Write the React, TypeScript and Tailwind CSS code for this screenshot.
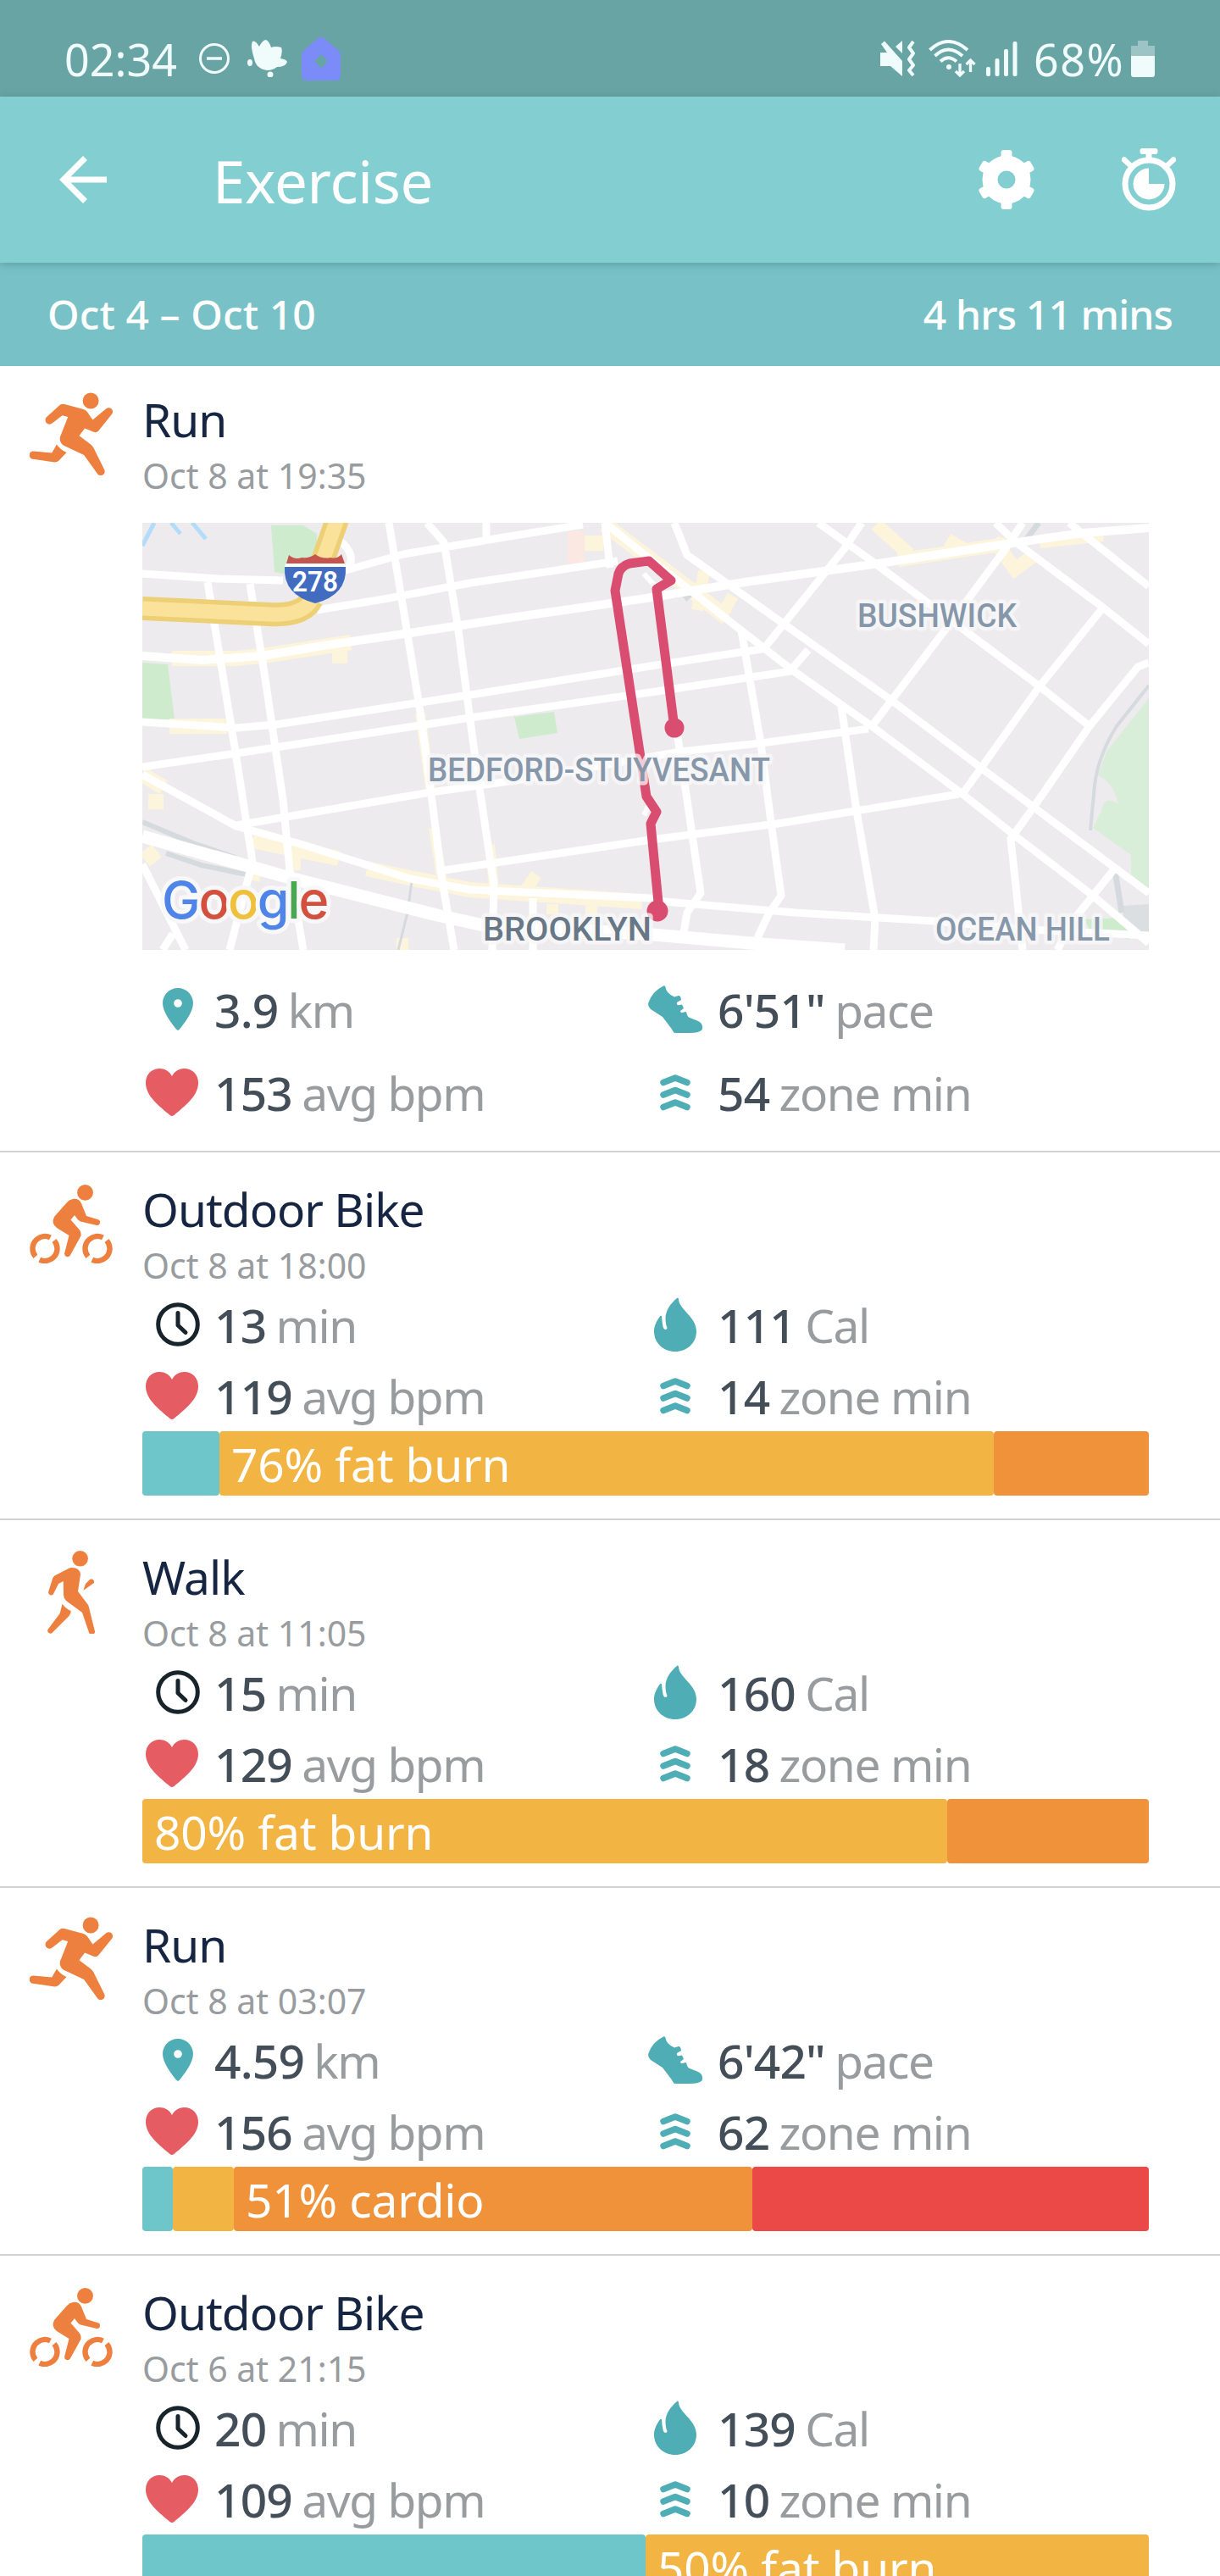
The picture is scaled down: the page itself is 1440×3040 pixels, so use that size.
import type { ReactNode } from "react";
import clsx from "clsx";

type ActivityType = "run" | "bike" | "walk";
type StatType = "distance" | "pace" | "heart" | "zone" | "time" | "calories";
type ZoneType = "light" | "fatBurn" | "cardio" | "peak";

interface Stat {
  type: StatType;
  value: string;
  unit: string;
}

interface Zone {
  type: ZoneType;
  width: number;
  label?: string;
}

interface Activity {
  id: number;
  type: ActivityType;
  title: string;
  date: string;
  stats: Stat[];
  hasMap?: boolean;
  zones?: Zone[];
}

const activities: Activity[] = [
  {
    id: 1,
    type: "run",
    title: "Run",
    date: "Oct 8 at 19:35",
    hasMap: true,
    stats: [
      { type: "distance", value: "3.9", unit: "km" },
      { type: "pace", value: "6'51\"", unit: "pace" },
      { type: "heart", value: "153", unit: "avg bpm" },
      { type: "zone", value: "54", unit: "zone min" },
    ],
  },
  {
    id: 2,
    type: "bike",
    title: "Outdoor Bike",
    date: "Oct 8 at 18:00",
    stats: [
      { type: "time", value: "13", unit: "min" },
      { type: "calories", value: "111", unit: "Cal" },
      { type: "heart", value: "119", unit: "avg bpm" },
      { type: "zone", value: "14", unit: "zone min" },
    ],
    zones: [
      { type: "light", width: 91 },
      { type: "fatBurn", width: 914, label: "76% fat burn" },
      { type: "cardio", width: 183 },
    ],
  },
  {
    id: 3,
    type: "walk",
    title: "Walk",
    date: "Oct 8 at 11:05",
    stats: [
      { type: "time", value: "15", unit: "min" },
      { type: "calories", value: "160", unit: "Cal" },
      { type: "heart", value: "129", unit: "avg bpm" },
      { type: "zone", value: "18", unit: "zone min" },
    ],
    zones: [
      { type: "fatBurn", width: 950, label: "80% fat burn" },
      { type: "cardio", width: 238 },
    ],
  },
  {
    id: 4,
    type: "run",
    title: "Run",
    date: "Oct 8 at 03:07",
    stats: [
      { type: "distance", value: "4.59", unit: "km" },
      { type: "pace", value: "6'42\"", unit: "pace" },
      { type: "heart", value: "156", unit: "avg bpm" },
      { type: "zone", value: "62", unit: "zone min" },
    ],
    zones: [
      { type: "light", width: 36 },
      { type: "fatBurn", width: 72 },
      { type: "cardio", width: 612, label: "51% cardio" },
      { type: "peak", width: 468 },
    ],
  },
  {
    id: 5,
    type: "bike",
    title: "Outdoor Bike",
    date: "Oct 6 at 21:15",
    stats: [
      { type: "time", value: "20", unit: "min" },
      { type: "calories", value: "139", unit: "Cal" },
      { type: "heart", value: "109", unit: "avg bpm" },
      { type: "zone", value: "10", unit: "zone min" },
    ],
    zones: [
      { type: "light", width: 594 },
      { type: "fatBurn", width: 594, label: "50% fat burn" },
    ],
  },
];

const zoneColors: Record<ZoneType, string> = {
  light: "bg-[#6fc6ca]",
  fatBurn: "bg-[#f2b544]",
  cardio: "bg-[#ef9239]",
  peak: "bg-[#eb4848]",
};

const activityIcons: Record<ActivityType, ReactNode> = {
  run: (
    <svg viewBox="105 69 295 293" className="h-[98px] w-[98px]" fill="#ed7f3f">
      <circle cx="322" cy="98" r="28.5" />
      <path d="M214 112 Q222 108 232 111 L296 128 Q304 131 310 138 L329 166 L376 127 A14 14 0 0 1 396 147 L350 204 Q342 213 332 209 L301 196 L281 222 L321 252 Q328 257 332 265 L370 342 A14 14 0 0 1 345 356 L298 291 L226 257 Q210 247 213 228 Q214 222 217 217 L241 155 L221 150 L186 177 A14 14 0 0 1 165 156 Z" />
      <path d="M201 253 Q214 272 236 282 L209 310 Q203 316 194 316 L117 305 A14 14 0 0 1 119 277 L184 283 Z" />
    </svg>
  ),
  bike: (
    <svg viewBox="0 0 98 93" className="mt-1 h-[93px] w-[98px]" fill="#ed7f3f">
      <circle cx="65.5" cy="9.4" r="9.4" />
      <path d="M51 17 Q58 16 61 22 L67 37 L80 41 A3.5 3.5 0 0 1 79 48 L60 43.5 Q57 42 55.5 39.5 L53 36 L48.5 41.5 L58.5 53 Q61 56 60.5 60.5 L47.8 83.5 A3.7 3.7 0 0 1 41 81.5 L46.5 60 L32 51 Q25 46 29 38 L44 21 Q47 17.5 51 17Z" />
      <g fill="none" stroke="#ed7f3f" strokeWidth="6.4" strokeDasharray="39.3 6.2">
        <circle cx="18" cy="75.5" r="14.5" transform="rotate(-41 18 75.5)" />
        <circle cx="80" cy="75.5" r="14.5" transform="rotate(-41 80 75.5)" />
      </g>
    </svg>
  ),
  walk: (
    <svg viewBox="0 0 56 98" className="mt-0.5 h-[98px] w-14" fill="#ed7f3f">
      <circle cx="38.6" cy="9.3" r="9.3" />
      <path d="M29 20 Q38 20 39 28 L36 48 L48 64 Q49 66 49.5 69 L55.7 94 A3.4 3.4 0 0 1 49 96.5 L41 73 L22 59 Q19 56 19 52 L18.8 36 L13 39 L7.5 50 A3.2 3.2 0 0 1 1.2 48.5 L6 33 Q6.5 31 8.5 29.5 L25 21 Q27 20 29 20Z" />
      <path d="M50 34 A3.4 3.4 0 0 1 55 38 L42.3 47 L45 39Z" />
      <path d="M17.5 62.7 Q21 68 27.6 71 Q28 74 25.5 77 L6 96.5 A3.3 3.3 0 0 1 .5 93 L14 75 Q15 73 15.5 71Z" />
    </svg>
  ),
};

const statIcons: Record<StatType, ReactNode> = {
  distance: (
    <svg viewBox="0 0 36 50" className="ml-6 h-[50px] w-9">
      <path
        fillRule="evenodd"
        fill="#4eadb5"
        d="M18 0 C28 0 36 8 36 18 C36 28 26 41 20 48.5 Q18 51 16 48.5 C10 41 0 28 0 18 C0 8 8 0 18 0Z M18 13.2 A4.8 4.8 0 1 0 18 22.8 A4.8 4.8 0 1 0 18 13.2Z"
      />
    </svg>
  ),
  pace: (
    <svg viewBox="0 0 64 56" className="ml-[3px] h-14 w-16" fill="#4eadb5">
      <path d="M18 .5 Q20 -.5 20.5 2 Q21 9 31 13.5 L36 12 Q38.5 12 39 17 L34 20 Q33 24 37 23 L40 22.5 L42 27 L38 30 Q38 33 42 31.5 L45 31 Q46 37 49 38 L58 41.5 Q66 45 63.5 52.5 Q60 56 48 56 L31 56 Q29 54 28 51.5 L17 37 L3 28 Q-1 24 .5 20 Q5 7 18 .5Z" />
    </svg>
  ),
  heart: (
    <svg viewBox="0 0 62 56" className="ml-1 h-14 w-[62px]" fill="#e65c63">
      <path d="M31 9 C34 3 40 0 45.5 0 C55 0 62 7 62 17 C62 33 45 45 33.5 55 Q31 57 28.5 55 C17 45 0 33 0 17 C0 7 7 0 16.5 0 C22 0 28 3 31 9Z" />
    </svg>
  ),
  zone: (
    <svg
      viewBox="0 0 36 43"
      className="ml-[17px] h-[43px] w-9"
      fill="none"
      stroke="#4eadb5"
      strokeWidth="7.5"
      strokeLinecap="round"
      strokeLinejoin="round"
    >
      <path d="M4 9.5 L18 4 L32 9.5 M4 24 L18 18.5 L32 24 M4 38.5 L18 33 L32 38.5" />
    </svg>
  ),
  time: (
    <svg
      viewBox="0 0 52 52"
      className="ml-4 h-[52px] w-[52px]"
      fill="none"
      stroke="#17242b"
      strokeWidth="5"
      strokeLinecap="round"
      strokeLinejoin="round"
    >
      <circle cx="26" cy="26" r="23.3" />
      <path d="M26 12.5 V27 L35 35.5" />
    </svg>
  ),
  calories: (
    <svg viewBox="0 0 50 64" className="ml-2.5 h-16 w-[50px]" fill="#4eadb5">
      <path d="M27 1 C20 7 13.5 15 13.5 25 C13.5 30 14.5 34 15.5 36 C15.5 38.5 12 38.5 11 36 C9.5 31 9.5 27 9 22.5 Q8 21 6.5 23 C3 28 0 34 0 40 C0 54 11 64 25 64 C39 64 50 54 50 40 C50 23 29 14 29 2 Q28.5 -.5 27 1Z" />
    </svg>
  ),
};

const StatusBar = () => (
  <div className="flex h-[114px] shrink-0 items-start justify-between bg-[#68a4a3] pt-[43px] pr-[77px] pl-[76px] text-[#f0fbfc]">
    <div className="flex h-[52px] items-center">
      <span className="w-[159px] pt-px text-[52px] leading-[52px]">02:34</span>
      <svg viewBox="0 0 36 36" className="h-9 w-9" fill="none" stroke="currentColor">
        <circle cx="18" cy="18" r="16.5" strokeWidth="3" />
        <path d="M9 18 H27" strokeWidth="3.5" />
      </svg>
      <svg viewBox="0 0 47 44" className="ml-[21px] h-11 w-[47px]" fill="currentColor">
        <path d="M8 22 C5 12 4 6 6 2 Q9 0 14 8 Q18 0 22 0 Q26 2 28 9 Q33 7 40 9 Q42 13 39 22 Q46 23 47 26 Q45 32 35 32 Q30 36 23 36 Q10 34 8 22Z" />
        <ellipse cx="3" cy="27" rx="3" ry="4" />
        <circle cx="27" cy="41" r="3.5" />
      </svg>
      <svg viewBox="0 0 46 52" className="ml-[17px] h-[52px] w-[46px]">
        <path
          fillRule="evenodd"
          fill="#7b8bf8"
          d="M19 2.5 Q23 -1 27 2.5 L43 16 Q46 18.5 46 22 V46 Q46 52 40 52 H6 Q0 52 0 46 V22 Q0 18.5 3 16Z M23 21 L31 29 L23 38 L15 29Z"
        />
      </svg>
    </div>
    <div className="flex h-[52px] items-center">
      <svg viewBox="0 0 41 44" className="h-11 w-[41px]" fill="currentColor">
        <path d="M0 15 H8 L1 5 L5 1.5 L26 25 V43 L12 31 H0Z M26 1 V16 L18 8Z" />
        <path
          d="M39 2 L34 9 L39 16 L34 23 L39 30 L34 36 L39 42"
          fill="none"
          stroke="currentColor"
          strokeWidth="4"
          strokeLinejoin="round"
        />
      </svg>
      <svg
        viewBox="0 0 56 44"
        className="ml-4 h-11 w-14"
        fill="none"
        stroke="currentColor"
        strokeWidth="4"
      >
        <path d="M1.5 12 Q23 -8 46 12 M7.5 19 Q23 4 40 19 M14 25.5 Q23 17 33 25.5" />
        <circle cx="24" cy="32" r="3" fill="currentColor" stroke="none" />
        <path d="M37 28 V42 M32 37 L37 42 L42 37 M49.5 38 V24 M44.5 29 L49.5 24 L54.5 29" strokeWidth="3.3" />
      </svg>
      <svg viewBox="0 0 38 41" className="ml-3 h-[41px] w-[38px]" fill="currentColor">
        <rect x="0" y="30" width="5" height="11" rx="2" />
        <rect x="10.5" y="20" width="5" height="21" rx="2" />
        <rect x="21" y="9" width="5" height="32" rx="2" />
        <rect x="31.5" y="0" width="5" height="41" rx="2" />
      </svg>
      <span className="ml-[18px] w-[111px] pt-px text-[52px] leading-[52px] tracking-[0.03em]">68%</span>
      <svg viewBox="0 0 28 43" className="ml-1 h-[43px] w-7">
        <path d="M8 0 H20 V6 H28 V18 H0 V6 H8Z" fill="#9cc4c4" />
        <path d="M0 18 H28 V40 Q28 43 25 43 H3 Q0 43 0 40Z" fill="currentColor" />
      </svg>
    </div>
  </div>
);

const AppBar = () => (
  <header className="relative z-10 flex h-[196px] shrink-0 items-center bg-[#82ced0] pr-[52px] pl-[70px] text-white shadow-[0_2px_10px_rgba(40,90,95,0.35)]">
    <button aria-label="Back">
      <svg
        viewBox="0 0 56 56"
        className="h-14 w-14"
        fill="none"
        stroke="currentColor"
        strokeWidth="7"
      >
        <path d="M30.5 2.5 L5 28 L30.5 53.5 M5 28 H56" />
      </svg>
    </button>
    <h1 className="ml-[125px] flex-1 pt-0.5 text-[69px] leading-[80px] tracking-[-0.004em]">
      Exercise
    </h1>
    <button aria-label="Settings">
      <svg viewBox="-33 -35 66 70" className="h-[70px] w-[66px]" fill="currentColor">
        <rect x="-6.5" y="-35" width="13" height="70" rx="3" />
        <rect x="-6.5" y="-35" width="13" height="70" rx="3" transform="rotate(60)" />
        <rect x="-6.5" y="-35" width="13" height="70" rx="3" transform="rotate(120)" />
        <circle r="28.5" />
        <circle r="10.5" fill="#82ced0" />
      </svg>
    </button>
    <button aria-label="Timer" className="ml-[103px]">
      <svg viewBox="0 0 64 74" className="h-[74px] w-16" fill="currentColor">
        <rect x="21.5" y="0" width="21" height="7" rx="3" />
        <path d="M28.5 4 H35.5 V14 H28.5Z" />
        <path
          d="M3 13.5 L11 21 M61 13.5 L53 21"
          stroke="currentColor"
          strokeWidth="6.5"
          strokeLinecap="round"
        />
        <circle cx="32" cy="42" r="28" fill="none" stroke="currentColor" strokeWidth="7" />
        <path d="M32 42 V23.5 A18.5 18.5 0 1 0 50.5 42Z" />
      </svg>
    </button>
  </header>
);

const RouteMap = () => (
  <svg viewBox="0 0 1188 504" className="mt-[30px] block h-[504px] w-[1188px] font-['Roboto',sans-serif]">
    <rect width="1188" height="504" fill="#eeebee" />

    {/* parks */}
    <g fill="#cfebce">
      <path d="M152 3 L190 3 L206 13 V44 L166 60 L156 58Z" />
      <path d="M0 165 L30 167 L38 232 H0Z" />
      <path d="M439 229 L486 223 L490 248 L445 255Z" />
      <path d="M1112 468 L1160 466 L1165 492 L1118 480Z" />
    </g>
    <path
      d="M1188 207 L1138 270 L1128 298 Q1146 306 1152 332 Q1136 320 1132 340 L1122 360 L1167 392 V423 L1188 433Z"
      fill="#d9eed9"
    />
    <path d="M1157 452 L1188 450 V492 L1160 480Z" fill="#dcdfe2" />

    {/* shopping areas */}
    <rect x="502" y="10" width="20" height="38" fill="#fce8e2" />
    <g fill="none" stroke="#fdf4dc" strokeWidth="18">
      <path d="M522 24 H544 M546 2 L592 37 L655 85 L690 112" />
      <path d="M35 160 H110 L142 157 L246 141 M233 145 V166 M32 240 H100" />
      <path d="M328 225 L340 313 M344 360 L354 423 M410 380 L415 430" strokeWidth="12" />
      <path d="M130 375 L232 396 M265 408 L320 420 L387 433 L590 447 M178 385 V410" />
      <path d="M0 297 L25 312 M16 320 V338 M4 385 L16 400 M120 410 L140 415" />
      <path
        d="M866 2 L905 37 M892 44 L1019 25 M950 20 L975 34 M1005 20 L1030 55 L1050 40 M1059 22 L1134 14"
        strokeWidth="16"
      />
      <path d="M663 57 L655 103 M697 86 L682 112" strokeWidth="14" />
      <path d="M448 440 L465 415 M484 450 V462 M530 452 V465 M307 490 V504" strokeWidth="14" />
    </g>

    {/* railways and waterways */}
    <g fill="none" stroke="#d5dade" strokeWidth="4">
      <path d="M0 353 L60 378 L110 395 M28 390 L70 404 L123 415" strokeWidth="6" />
      <path d="M318 423 L313 460 L302 504" strokeWidth="3" />
      <path d="M1188 192 L1150 240 Q1128 275 1124 310 L1119 363" />
      <path d="M1058 0 L1040 24 M1148 410 L1156 460 M640 90 L655 78" strokeWidth="7" />
    </g>
    <path
      d="M0 27 L14 0 M34 0 L45 13 M59 0 L75 19"
      stroke="#b3dcfa"
      strokeWidth="5"
      fill="none"
    />

    {/* streets */}
    <g fill="none" stroke="#fff" strokeWidth="9" strokeLinejoin="round">
      <path d="M0 60 L90 66 L166 68 M232 20 Q256 40 240 56 L308 37 L427 17 L520 2" />
      <path d="M206 103 L285 90 L387 71 L482 57 L561 45" />
      <path
        d="M0 157 L71 162 L142 157 L213 145 L316 130 L435 112 L595 89 L711 70 L869 48 L1019 25 L1110 12 L1188 6"
        strokeWidth="10"
      />
      <path d="M0 235 L111 242 L158 238 L328 212 L387 203 L600 169 L711 152 L738 148" />
      <path d="M0 288 L111 272 L387 230 L600 200 L766 175" />
      <path d="M111 357 L340 318 L447 303 L635 270 L730 260 L857 243" />
      <path d="M356 410 L411 402 L600 374 L750 355 L964 320" />
      <path d="M77 70 L89 143 L111 277 L130 400 L103 504" />
      <path d="M127 72 L144 177 L166 327 L174 410 L190 504" />
      <path d="M291 0 L304 77 L328 223 L340 313 L354 423 L368 504" />
      <path d="M336 0 L356 23 L372 120 L395 293 L415 427 L413 504" />
      <path d="M406 0 V23 M546 0 L552 53 M461 443 V504" />
      <path d="M0 297 L111 358 L190 380 L316 420 L387 433 L601 443 L616 447 L770 460 L936 470 L1047 480 L1188 487" />
      <path d="M0 370 L178 420 L348 463 L403 475 L592 485 L730 497 L829 504" strokeWidth="15" />
      <path d="M0 403 L51 504 M24 504 L36 485" />
      <path d="M628 0 L643 38 L758 120 L885 210 L991 290 L1188 437" />
      <path d="M546 0 L592 37 L651 83 L707 127 L766 173 L861 240 L968 320 L1031 370 L1122 440 L1188 496" />
      <path d="M798 0 L865 48 L952 113 L1059 193 L1118 240" />
      <path d="M1007 0 L1031 23 L1134 100 L1188 143 M1094 0 L1188 75" />
      <path d="M849 0 L829 30 L734 148 M786 150 L766 173" />
      <path d="M1039 0 L1017 33 L960 110 L861 240" />
      <path d="M1134 100 L1059 193 L968 320" />
      <path d="M1188 165 L1175 170 L1118 240 L1051 337 L1025 373 L1039 504" />
      <path d="M1146 410 L1098 470 L1080 504" />
      <path d="M707 127 L730 260 L742 353 L754 440 L740 460 L726 490" />
      <path d="M825 217 L843 340 L865 467 L863 504" />
      <path d="M630 240 L643 327 L659 437 L643 460 L639 483" />
      <path d="M592 60 L610 80 M600 330 L592 345" strokeWidth="6" />
    </g>

    {/* highway */}
    <g fill="none">
      <path d="M0 101 L150 108 Q190 110 200 90 M211 50 L230 -4" stroke="#edcf75" strokeWidth="28" />
      <path d="M0 101 L150 108 Q190 110 200 90 M211 50 L230 -4" stroke="#fbe29b" strokeWidth="17" />
    </g>
    <path d="M173 38 Q180 44 188 41 Q198 42 204 37 Q212 43 222 41 Q230 43 235 37 L239 48 H170Z" fill="#c4554e" />
    <path d="M169 48 H239 V52 H168Z" fill="#fff" />
    <path d="M168 52 H240 Q242 85 204 95 Q166 85 168 52Z" fill="#416cc0" />
    <text x="177" y="81" fontSize="33" fontWeight="600" fill="#fff" textLength="54" lengthAdjust="spacingAndGlyphs">
      278
    </text>

    {/* route */}
    <path
      d="M628 242 L607 78 L624 68 L598 45 L575 48 Q565 51 562 60 L558 80 L587 270 L595 323 L607 341 L600 355 L610 458"
      fill="none"
      stroke="#d94e70"
      strokeWidth="11"
      strokeLinejoin="round"
    />
    <circle cx="628" cy="242" r="11.5" fill="#d94e70" />
    <circle cx="608" cy="458" r="12.5" fill="#d94e70" />

    <g
      fontSize="39"
      fontWeight="500"
      fill="#8797aa"
      stroke="#f8f8f9"
      strokeOpacity="0.75"
      strokeWidth="9"
      strokeLinejoin="round"
      paintOrder="stroke"
    >
      <text x="844" y="123" textLength="188" lengthAdjust="spacingAndGlyphs">BUSHWICK</text>
      <text x="337" y="305" textLength="404" lengthAdjust="spacingAndGlyphs">BEDFORD-STUYVESANT</text>
      <text x="402" y="493" fill="#687785" textLength="199" lengthAdjust="spacingAndGlyphs">BROOKLYN</text>
      <text x="936" y="493" textLength="206" lengthAdjust="spacingAndGlyphs">OCEAN HILL</text>
    </g>

    <text
      x="23"
      y="467"
      fontSize="61"
      fontWeight="500"
      letterSpacing="-2.2"
      stroke="#f8f8f9"
      strokeWidth="10"
      strokeLinejoin="round"
      paintOrder="stroke"
      className="font-['Inter',sans-serif]"
    >
      <tspan fill="#4f84e8">G</tspan>
      <tspan fill="#d3503f">o</tspan>
      <tspan fill="#efc03c">o</tspan>
      <tspan fill="#4f84e8">g</tspan>
      <tspan fill="#4ba653">l</tspan>
      <tspan fill="#d3503f">e</tspan>
    </text>
  </svg>
);

const StatItem = ({ stat, tall }: { stat: Stat; tall?: boolean }) => (
  <div className={clsx("flex items-center", tall ? "h-[98px]" : "h-[84px]")}>
    <div className="w-[85px] shrink-0">{statIcons[stat.type]}</div>
    <p className="pt-0.5 text-[55px] leading-[60px] whitespace-nowrap">
      <span className="font-medium tracking-[-0.015em] text-[#444e59]">{stat.value}</span>{" "}
      <span className="-ml-[3px] tracking-[-0.026em] text-[#989c9f]">{stat.unit}</span>
    </p>
  </div>
);

const ZoneBar = ({ zones }: { zones: Zone[] }) => (
  <div className="flex h-[76px] w-[1188px]">
    {zones.map((zone) => (
      <div
        key={zone.type}
        className={clsx("flex items-center overflow-hidden rounded-[4px] pl-3.5", zoneColors[zone.type])}
        style={{ width: zone.width }}
      >
        {zone.label && (
          <span className="pt-0.5 text-[55px] leading-[74px] tracking-[-0.003em] whitespace-nowrap text-white">
            {zone.label}
          </span>
        )}
      </div>
    ))}
  </div>
);

const ActivityRow = ({ activity }: { activity: Activity }) => {
  const { type, title, date, stats, hasMap, zones } = activity;

  return (
    <li
      className={clsx(
        "flex shrink-0 border-b-2 border-[#d0d2d3]",
        hasMap ? "h-[928px] pt-[33px]" : "h-[434px] pt-[37px]"
      )}
    >
      <div className={clsx("flex w-[168px] shrink-0 items-start justify-center", hasMap ? "-mt-0.5" : "-mt-[3px]")}>
        {activityIcons[type]}
      </div>
      <div className="w-[1188px]">
        <h2 className="text-[55px] leading-[60px] tracking-[-0.018em] text-[#162642]">{title}</h2>
        <p className="mt-2.5 text-[41px] leading-[52px] text-[#989c9f]">{date}</p>
        {hasMap && <RouteMap />}
        <div className={clsx("grid grid-cols-[594px_594px]", hasMap ? "mt-[21px]" : "mt-0.5")}>
          {stats.map((stat) => (
            <StatItem key={stat.type} stat={stat} tall={hasMap} />
          ))}
        </div>
        {zones && <ZoneBar zones={zones} />}
      </div>
    </li>
  );
};

export default function App() {
  return (
    <div className="flex h-[3040px] w-[1440px] flex-col overflow-hidden bg-white font-['Noto_Sans',sans-serif]">
      <StatusBar />
      <AppBar />
      <div className="flex h-[122px] shrink-0 items-center justify-between bg-[#78c2c7] px-14 text-[48px] leading-[60px] font-medium text-white">
        <span className="tracking-[0.002em]">Oct 4 – Oct 10</span>
        <span className="tracking-[-0.018em]">4 hrs 11 mins</span>
      </div>
      <ul>
        {activities.map((activity) => (
          <ActivityRow key={activity.id} activity={activity} />
        ))}
      </ul>
    </div>
  );
}
